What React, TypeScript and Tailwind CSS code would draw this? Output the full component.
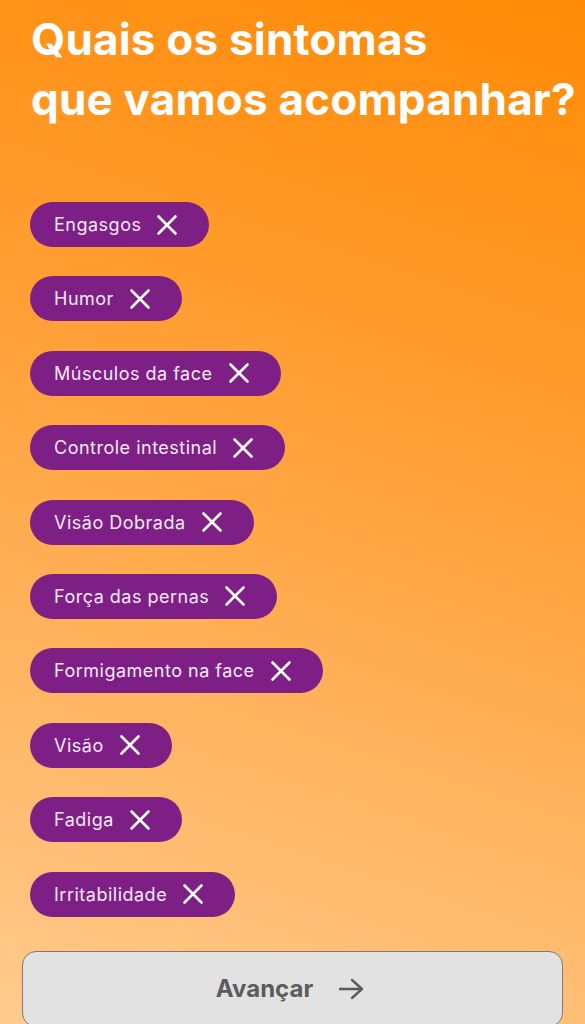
import React from "react";

const items = [
  "Engasgos",
  "Humor",
  "Músculos da face",
  "Controle intestinal",
  "Visão Dobrada",
  "Força das pernas",
  "Formigamento na face",
  "Visão",
  "Fadiga",
  "Irritabilidade",
];

function XIcon() {
  return (
    <svg width="22" height="22" viewBox="0 0 22 22" fill="none" stroke="white" strokeWidth="2.6" strokeLinecap="round">
      <path d="M2.5 2.5 L19.5 19.5 M19.5 2.5 L2.5 19.5" />
    </svg>
  );
}

export default function App() {
  return (
    <div
      className="w-[585px] h-[1024px] overflow-hidden flex flex-col bg-[linear-gradient(198deg,#ff8a05_0%,#ffa23c_45%,#ffcb8e_100%)]"
      style={{ fontFamily: "Inter, 'Noto Sans', sans-serif" }}
    >
      <h1 className="pl-[31px] pt-[9px] text-white font-bold text-[44px] leading-[60px] tracking-[0.2px]">
        Quais os sintomas
        <br />
        que vamos acompanhar?
      </h1>
      <div className="flex flex-col items-start gap-[29.4px] pl-[30px] mt-[73px]">
        {items.map((t) => (
          <div
            key={t}
            className="h-[45px] flex items-center rounded-full bg-[#7e1f86] pl-[24px] pr-[31px] gap-[15px]"
          >
            <span className="text-[18px] text-[#f7eaf8] tracking-[0.5px]">{t}</span>
            <XIcon />
          </div>
        ))}
      </div>
      <div className="mt-[34px] mx-[22px] h-[76px] shrink-0 rounded-[14px] border border-[#7a7a7a] bg-[#e2e2e2] flex items-center justify-center gap-[24px]">
        <span className="text-[24px] font-bold text-[#5c5c5c] -ml-[4px]">Avançar</span>
        <svg width="28" height="24" viewBox="0 0 28 24" fill="none" stroke="#5c5c5c" strokeWidth="2.4" strokeLinecap="round" strokeLinejoin="round">
          <path d="M3 12 H25 M15 3 L25 12 L15 21" />
        </svg>
      </div>
    </div>
  );
}
